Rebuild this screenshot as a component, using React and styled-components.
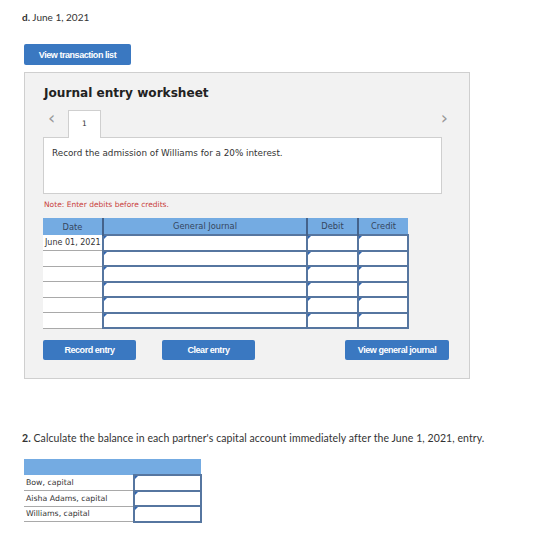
import React from 'react';
import styled, { createGlobalStyle } from 'styled-components';

const GlobalStyle = createGlobalStyle`
  body {
    margin: 0;
    background: #fff;
    font-family: "Lato", "Open Sans", sans-serif;
  }
`;

const rows = ['June 01, 2021', '', '', '', '', ''];
const partners = ['Bow, capital', 'Aisha Adams, capital', 'Williams, capital'];

const App = () => {
  return (
    <Page>
      <GlobalStyle />
      <PartLabel>
        <b>d.</b> June 1, 2021
      </PartLabel>
      <TopAction>
        <BlueButton $width={107} $height={21}>View transaction list</BlueButton>
      </TopAction>

      <Panel>
        <Title>Journal entry worksheet</Title>
        <TabRow>
          <Chevron>&lsaquo;</Chevron>
          <Tab>1</Tab>
          <Spacer />
          <Chevron $right>&rsaquo;</Chevron>
        </TabRow>
        <TaskBox>Record the admission of Williams for a 20% interest.</TaskBox>
        <Note>Note: Enter debits before credits.</Note>

        <JournalTable>
          <colgroup>
            <col style={{ width: 60 }} />
            <col style={{ width: 204 }} />
            <col style={{ width: 51 }} />
            <col style={{ width: 50 }} />
          </colgroup>
          <thead>
            <tr>
              <HeadCell>Date</HeadCell>
              <HeadCell $divider>General Journal</HeadCell>
              <HeadCell $divider>Debit</HeadCell>
              <HeadCell $divider>Credit</HeadCell>
            </tr>
          </thead>
          <tbody>
            {rows.map((d, i) => (
              <tr key={i}>
                <DateCell>{d}</DateCell>
                <InputCell><Marker /></InputCell>
                <InputCell><Marker /></InputCell>
                <InputCell><Marker /></InputCell>
              </tr>
            ))}
          </tbody>
        </JournalTable>

        <ButtonRow>
          <BlueButton $width={93} $height={20}>Record entry</BlueButton>
          <BlueButton $width={93} $height={20}>Clear entry</BlueButton>
          <Spacer />
          <BlueButton $width={104} $height={20}>View general journal</BlueButton>
        </ButtonRow>
      </Panel>

      <Question>
        <b>2.</b> Calculate the balance in each partner's capital account immediately after the June 1, 2021, entry.
      </Question>

      <CapitalTable>
        <colgroup>
          <col style={{ width: 110 }} />
          <col style={{ width: 67 }} />
        </colgroup>
        <thead>
          <tr>
            <HeadCell colSpan={2} $short />
          </tr>
        </thead>
        <tbody>
          {partners.map((p) => (
            <tr key={p}>
              <NameCell>{p}</NameCell>
              <InputCell><Marker /></InputCell>
            </tr>
          ))}
        </tbody>
      </CapitalTable>
    </Page>
  );
};

const Page = styled.div`
  padding: 11px 0 30px 22px;
  color: #333;
`;

const PartLabel = styled.div`
  font-size: 10px;
  line-height: 12px;
  color: #333;
  margin-bottom: 21px;
  b {
    font-weight: 700;
  }
`;

const TopAction = styled.div`
  padding-left: 2px;
`;

const BlueButton = styled.button`
  display: flex;
  align-items: center;
  justify-content: center;
  width: ${(p) => p.$width}px;
  height: ${(p) => p.$height}px;
  padding: 0;
  margin: 0;
  border: none;
  border-radius: 2px;
  background: #3a78c1;
  color: #fff;
  font-family: "Liberation Sans", Arial, sans-serif;
  font-size: 9px;
  font-weight: 700;
  letter-spacing: -0.45px;
`;

const Panel = styled.div`
  margin: 7px 0 0 2px;
  width: 446px;
  height: 307px;
  box-sizing: border-box;
  padding: 12px 0 0 18px;
  background: #f2f2f2;
  border: 1px solid #cfcfcf;
`;

const Title = styled.div`
  font-family: "DejaVu Sans", Verdana, sans-serif;
  font-size: 12.1px;
  font-weight: 700;
  color: #222;
  height: 16px;
  line-height: 16px;
  padding-left: 1px;
  margin-bottom: 8px;
`;

const TabRow = styled.div`
  display: flex;
  align-items: center;
  width: 405px;
  height: 28px;
`;

const Chevron = styled.span`
  width: 20px;
  padding: ${(p) => (p.$right ? '0' : '0 0 0 5px')};
  text-align: ${(p) => (p.$right ? 'right' : 'left')};
  font-family: "DejaVu Sans", sans-serif;
  font-size: 18px;
  color: #999;
  line-height: 18px;
  margin-top: -10px;
`;

const Tab = styled.div`
  width: 33px;
  height: 28px;
  box-sizing: border-box;
  background: #fff;
  border: 1px solid #cfcfcf;
  border-bottom: none;
  font-family: "DejaVu Sans", Verdana, sans-serif;
  font-size: 7.5px;
  color: #333;
  text-align: center;
  padding-top: 8px;
  position: relative;
  top: 1px;
`;

const Spacer = styled.div`
  flex: 1;
`;

const TaskBox = styled.div`
  width: 399px;
  height: 57px;
  box-sizing: border-box;
  background: #fff;
  border: 1px solid #cfcfcf;
  padding: 10px 0 0 8px;
  font-family: "DejaVu Sans", Verdana, sans-serif;
  font-size: 8.8px;
  color: #333;
`;

const Note = styled.div`
  margin: 6px 0 8px 1px;
  font-family: "DejaVu Sans", Verdana, sans-serif;
  font-size: 7.5px;
  color: #c9413c;
  line-height: 10px;
`;

const JournalTable = styled.table`
  border-collapse: collapse;
  table-layout: fixed;
  width: 365px;
`;

const HeadCell = styled.th`
  height: ${(p) => (p.$short ? 15 : 16)}px;
  padding: 0;
  background: #74abe2;
  border-left: ${(p) => (p.$divider ? '2px solid #44628a' : 'none')};
  font-family: "DejaVu Sans", Verdana, sans-serif;
  font-size: 8.3px;
  font-weight: 400;
  color: #34465e;
  text-align: center;
`;

const DateCell = styled.td`
  height: 14px;
  padding: 0 0 0 2px;
  background: #fff;
  border-bottom: 1px solid #a9a9a9;
  font-family: "DejaVu Sans", Verdana, sans-serif;
  font-size: 8px;
  color: #333;
  white-space: nowrap;
`;

const InputCell = styled.td`
  height: 13.5px;
  padding: 0;
  background: #fff;
  border: 2px solid #5676a0;
  position: relative;
`;

const Marker = styled.span`
  position: absolute;
  left: 0;
  top: 0;
  width: 0;
  height: 0;
  border-top: 3px solid #2f66b3;
  border-right: 3px solid transparent;
`;

const ButtonRow = styled.div`
  display: flex;
  gap: 26px;
  width: 406px;
  margin-top: 11px;
`;

const Question = styled.div`
  margin-top: 53px;
  font-size: 10.5px;
  letter-spacing: 0.08px;
  line-height: 12px;
  color: #333;
  b {
    font-weight: 700;
  }
`;

const CapitalTable = styled.table`
  margin: 15px 0 0 2px;
  border-collapse: collapse;
  table-layout: fixed;
  width: 177px;
`;

const NameCell = styled.td`
  height: 14px;
  padding: 0 0 0 2px;
  background: #fff;
  border-bottom: 1px solid #a9a9a9;
  font-family: "DejaVu Sans", Verdana, sans-serif;
  font-size: 7.8px;
  color: #333;
  white-space: nowrap;
`;

export default App;
